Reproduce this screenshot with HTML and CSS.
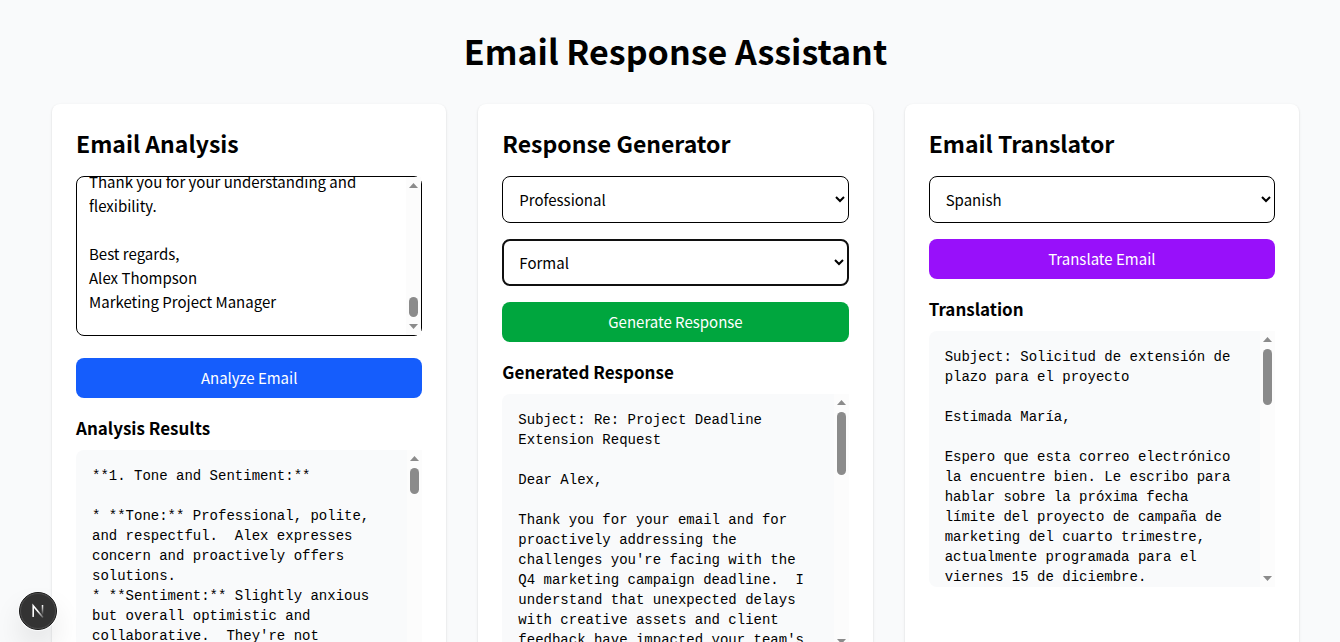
FILE: index.html
```html
<!DOCTYPE html>
<html lang="en">
<head>
<meta charset="utf-8">
<meta name="viewport" content="width=device-width, initial-scale=1">
<title>Email Response Assistant</title>
<link rel="stylesheet" href="styles.css">
</head>
<body>
<main class="page">
  <h1 class="page-title">Email Response Assistant</h1>
  <div class="columns">
    <section class="card">
      <h2 class="card-title">Email Analysis</h2>
      <div class="email-box">
        <textarea class="email-input" id="email" aria-label="Email content">
Subject: Project Deadline Extension Request

Dear Maria,

I would like to request an extension of the Q4 marketing campaign deadline, currently scheduled for Friday, December 15th.

Thank you for your understanding and flexibility.

Best regards,
Alex Thompson
Marketing Project Manager
</textarea>
        <div class="scrollbar" aria-hidden="true">
          <svg class="arrow" viewBox="0 0 9 5"><path d="M0 5 4.500 0 9 5z"/></svg>
          <div class="track track-end"><div class="thumb thumb-email"></div></div>
          <svg class="arrow" viewBox="0 0 9 5"><path d="M0 0H9L4.500 5z"/></svg>
        </div>
      </div>
      <button class="button button-analyze" type="button">Analyze Email</button>
      <h3 class="result-title">Analysis Results</h3>
      <div class="result">
<pre class="result-text" tabindex="0">**1. Tone and Sentiment:**

* **Tone:** Professional, polite, and respectful.  Alex expresses concern and proactively offers solutions.
* **Sentiment:** Slightly anxious but overall optimistic and collaborative.  They're not</pre>
        <div class="scrollbar" aria-hidden="true">
          <svg class="arrow" viewBox="0 0 9 5"><path d="M0 5 4.500 0 9 5z"/></svg>
          <div class="track"><div class="thumb thumb-analysis"></div></div>
          <svg class="arrow" viewBox="0 0 9 5"><path d="M0 0H9L4.500 5z"/></svg>
        </div>
      </div>
    </section>

    <section class="card">
      <h2 class="card-title">Response Generator</h2>
      <select class="select" aria-label="Response style"><option>Professional</option><option>Friendly</option></select>
      <select class="select select-active" aria-label="Response tone"><option>Formal</option><option>Casual</option></select>
      <button class="button button-generate" type="button">Generate Response</button>
      <h3 class="result-title">Generated Response</h3>
      <div class="result">
<pre class="result-text" tabindex="0">Subject: Re: Project Deadline Extension Request

Dear Alex,

Thank you for your email and for proactively addressing the challenges you're facing with the Q4 marketing campaign deadline.  I understand that unexpected delays with creative assets and client feedback have impacted your team's</pre>
        <div class="scrollbar" aria-hidden="true">
          <svg class="arrow" viewBox="0 0 9 5"><path d="M0 5 4.500 0 9 5z"/></svg>
          <div class="track"><div class="thumb thumb-response"></div></div>
          <svg class="arrow" viewBox="0 0 9 5"><path d="M0 0H9L4.500 5z"/></svg>
        </div>
      </div>
    </section>

    <section class="card">
      <h2 class="card-title">Email Translator</h2>
      <select class="select" aria-label="Target language"><option>Spanish</option><option>French</option></select>
      <button class="button button-translate" type="button">Translate Email</button>
      <h3 class="result-title">Translation</h3>
      <div class="result">
<pre class="result-text" tabindex="0">Subject: Solicitud de extensión de plazo para el proyecto

Estimada María,

Espero que esta correo electrónico la encuentre bien. Le escribo para hablar sobre la próxima fecha límite del proyecto de campaña de marketing del cuarto trimestre, actualmente programada para el viernes 15 de diciembre.</pre>
        <div class="scrollbar" aria-hidden="true">
          <svg class="arrow" viewBox="0 0 9 5"><path d="M0 5 4.500 0 9 5z"/></svg>
          <div class="track"><div class="thumb thumb-translation"></div></div>
          <svg class="arrow" viewBox="0 0 9 5"><path d="M0 0H9L4.500 5z"/></svg>
        </div>
      </div>
    </section>
  </div>
</main>

<button class="dev-badge" type="button" aria-label="Open developer tools">
  <svg viewBox="0 0 40 40" width="40" height="40" aria-hidden="true">
    <defs>
      <linearGradient id="diag" x1="20" y1="20" x2="26" y2="27" gradientUnits="userSpaceOnUse">
        <stop offset="0" stop-color="#fff"/><stop offset="1" stop-color="#fff" stop-opacity="0.1"/>
      </linearGradient>
      <linearGradient id="stem" x1="0" y1="14" x2="0" y2="24" gradientUnits="userSpaceOnUse">
        <stop offset="0" stop-color="#fff"/><stop offset="1" stop-color="#fff" stop-opacity="0"/>
      </linearGradient>
    </defs>
    <circle cx="20" cy="20" r="18.5" fill="#333" stroke="#171717"/>
    <circle cx="20" cy="20" r="17.5" fill="none" stroke="#4c4c4c"/>
    <path d="M15.2 26V14.8L25 26.5" fill="none" stroke="url(#diag)" stroke-width="1.6"/>
    <path d="M24.5 14V24" fill="none" stroke="url(#stem)" stroke-width="1.5"/>
  </svg>
</button>
<script>
  const email = document.getElementById('email');
  email.scrollTop = email.scrollHeight - email.clientHeight - 15;
</script>
</body>
</html>
```
FILE: styles.css
```css
*, *::before, *::after { box-sizing: border-box; }

body {
  margin: 0;
  height: 100vh;
  overflow: hidden;
  background: #f9fafb;
  color: #000;
  font-family: "Noto Sans CJK SC", "Noto Sans", sans-serif;
  font-size: 15px;
  line-height: 24px;
}

h1, h2, h3, pre { margin: 0; }

.page { padding: 32px 41px 32px 52px; }

.page-title {
  margin-bottom: 34px;
  font-size: 34px;
  line-height: 38px;
  font-weight: 700;
  text-align: center;
}

.columns {
  display: grid;
  grid-template-columns: repeat(3, minmax(0, 1fr));
  gap: 32px;
}

.card {
  padding: 24px;
  border-radius: 8px;
  background: #fff;
  box-shadow: 0 1px 3px rgba(0, 0, 0, 0.1), 0 1px 2px rgba(0, 0, 0, 0.06);
}

.card-title {
  margin-bottom: 18px;
  font-size: 23px;
  line-height: 30px;
  font-weight: 700;
}

.email-box {
  display: flex;
  height: 160px;
  margin-bottom: 22px;
  border: 1px solid #000;
  border-radius: 8px;
}

.email-input {
  flex: 1;
  min-width: 0;
  padding: 12px;
  border: 0;
  border-radius: 8px;
  outline: 0;
  background: none;
  color: inherit;
  font: inherit;
  resize: none;
  scrollbar-width: none;
}

.select {
  display: block;
  width: 100%;
  height: 47px;
  margin-bottom: 16px;
  padding: 0 12px;
  border: 1px solid #000;
  border-radius: 8px;
  outline: 0;
  background-color: #fff;
  color: inherit;
  font: inherit;
}

.select-active {
  padding: 0 11px;
  border: 2px solid #101010;
}

.button {
  display: block;
  width: 100%;
  height: 40px;
  margin-bottom: 16px;
  padding: 0 16px;
  border: 0;
  border-radius: 8px;
  color: #fff;
  font: inherit;
}

.button-analyze { background: #155dfc; }
.button-generate { background: #00a63e; }
.button-translate { background: #9810fa; }

.result-title {
  margin-bottom: 8px;
  font-size: 17px;
  line-height: 28px;
  font-weight: 700;
}

.result {
  display: flex;
  height: 256px;
  border-radius: 8px;
  background: #f9fafb;
}

.result-text {
  flex: 1;
  min-width: 0;
  padding: 16px;
  overflow-y: auto;
  scrollbar-width: none;
  font-family: "Liberation Mono", monospace;
  font-size: 14px;
  line-height: 20px;
  white-space: pre-wrap;
}

.scrollbar {
  display: flex;
  flex-direction: column;
  align-items: center;
  width: 15px;
  padding: 6px 0;
  background: #fcfcfc;
}

.arrow {
  width: 9px;
  height: 5px;
  fill: #8b8b8b;
}

.track {
  flex: 1;
  display: flex;
  flex-direction: column;
  padding: 7px 0;
}

.track-end { justify-content: flex-end; }

.thumb {
  width: 9px;
  border-radius: 5px;
  background: #8b8b8b;
}

.thumb-email { height: 20px; }
.thumb-analysis { height: 26px; }
.thumb-response { height: 63px; }
.thumb-translation { height: 56px; }

.dev-badge {
  position: fixed;
  left: 18px;
  bottom: 11px;
  width: 40px;
  height: 40px;
  padding: 0;
  border: 0;
  border-radius: 50%;
  background: none;
  box-shadow: 0 16px 32px -8px rgba(0, 0, 0, 0.24);
}

.dev-badge svg { display: block; }
```
